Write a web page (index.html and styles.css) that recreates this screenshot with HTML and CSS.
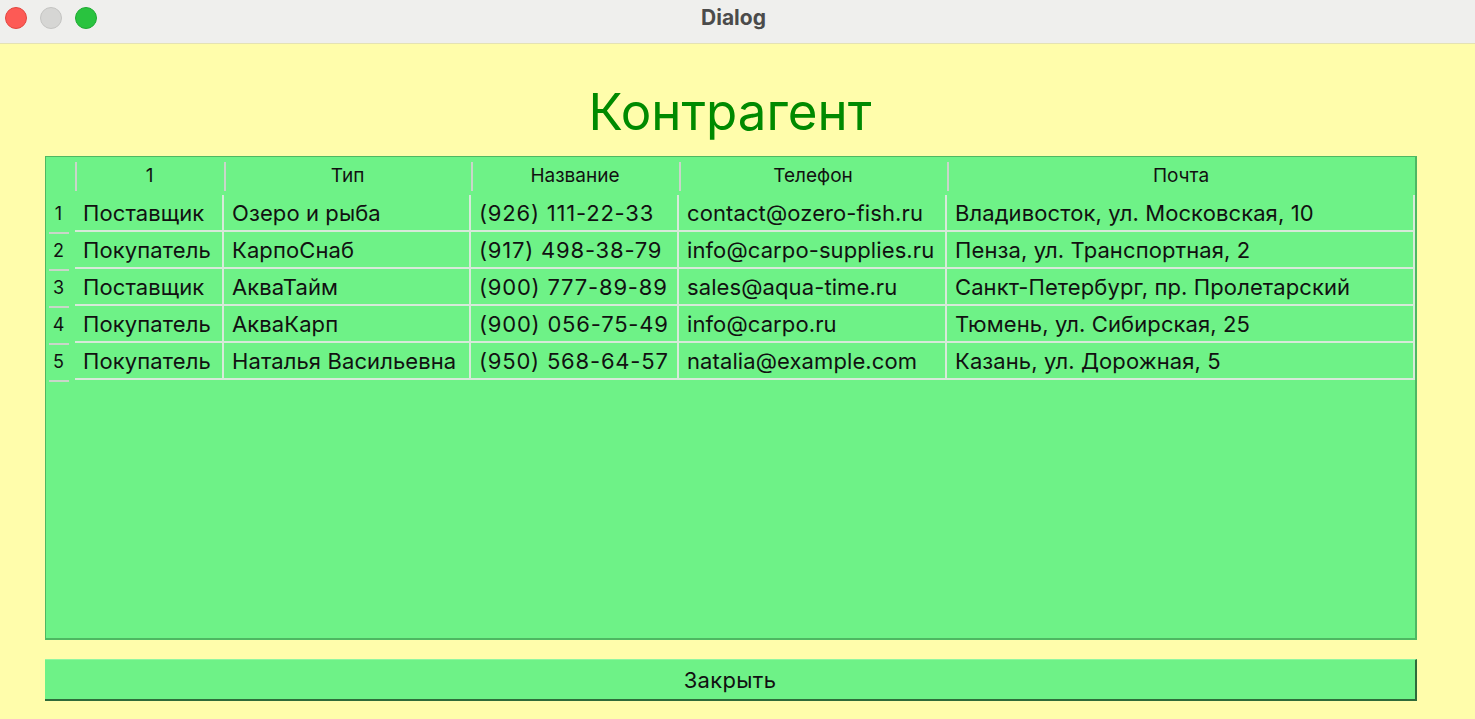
FILE: index.html
```html
<!DOCTYPE html>
<html lang="ru">
<head>
<meta charset="utf-8">
<title>Dialog</title>
<link rel="stylesheet" href="styles.css">
</head>
<body>
<div class="window">
  <div class="titlebar">
    <div class="lights">
      <span class="light red"></span>
      <span class="light gray"></span>
      <span class="light green"></span>
    </div>
    <div class="wtitle">Dialog</div>
  </div>
  <div class="content">
    <h1 class="heading">Контрагент</h1>
    <div class="table">
      <div class="row head">
        <div class="corner"></div>
        <div class="hcell">1</div>
        <div class="hcell">Тип</div>
        <div class="hcell">Название</div>
        <div class="hcell">Телефон</div>
        <div class="hcell">Почта</div>
      </div>
      <div class="row">
        <div class="vh">1</div>
        <div class="cell">Поставщик</div>
        <div class="cell">Озеро и рыба</div>
        <div class="cell phone">(926) 111-22-33</div>
        <div class="cell">contact@ozero-fish.ru</div>
        <div class="cell">Владивосток, ул. Московская, 10</div>
      </div>
      <div class="row">
        <div class="vh">2</div>
        <div class="cell">Покупатель</div>
        <div class="cell">КарпоСнаб</div>
        <div class="cell phone">(917) 498-38-79</div>
        <div class="cell">info@carpo-supplies.ru</div>
        <div class="cell">Пенза, ул. Транспортная, 2</div>
      </div>
      <div class="row">
        <div class="vh">3</div>
        <div class="cell">Поставщик</div>
        <div class="cell">АкваТайм</div>
        <div class="cell phone">(900) 777-89-89</div>
        <div class="cell">sales@aqua-time.ru</div>
        <div class="cell">Санкт-Петербург, пр. Пролетарский</div>
      </div>
      <div class="row">
        <div class="vh">4</div>
        <div class="cell">Покупатель</div>
        <div class="cell">АкваКарп</div>
        <div class="cell phone">(900) 056-75-49</div>
        <div class="cell">info@carpo.ru</div>
        <div class="cell">Тюмень, ул. Сибирская, 25</div>
      </div>
      <div class="row">
        <div class="vh">5</div>
        <div class="cell">Покупатель</div>
        <div class="cell">Наталья Васильевна</div>
        <div class="cell phone">(950) 568-64-57</div>
        <div class="cell">natalia@example.com</div>
        <div class="cell">Казань, ул. Дорожная, 5</div>
      </div>
    </div>
    <button class="close">Закрыть</button>
  </div>
</div>
</body>
</html>
```

FILE: styles.css
```css
* { box-sizing: border-box; }
html, body { margin: 0; padding: 0; }
body {
  width: 1475px;
  height: 719px;
  overflow: hidden;
  font-family: Inter, "Liberation Sans", sans-serif;
  background: #fffdab;
}
.window { display: flex; flex-direction: column; height: 719px; }
.titlebar {
  height: 44px;
  flex: none;
  background: #efefed;
  border-bottom: 1px solid #e4e2b4;
  display: flex;
  align-items: center;
  position: relative;
}
.lights { display: flex; gap: 13px; padding-left: 5px; padding-bottom: 7px; }
.light { width: 22px; height: 22px; border-radius: 50%; display: block; }
.light.red { background: #fd5a55; border: 1px solid #e2463f; }
.light.gray { background: #d6d6d4; border: 1px solid #c4c4c2; }
.light.green { background: #29c33f; border: 1px solid #1faa33; }
.wtitle {
  position: absolute;
  left: 0; right: 8px; top: 0; bottom: 0;
  display: flex; align-items: center; justify-content: center;
  font-weight: 700;
  font-size: 21px;
  color: #4b4b4b;
  padding-bottom: 9px;
}
.content {
  flex: 1;
  display: flex;
  flex-direction: column;
  padding: 0 58px 0 45px;
}
.heading {
  margin: 0;
  height: 112px;
  padding-top: 36px;
  text-align: center;
  font-weight: 400;
  font-size: 51px;
  line-height: 64px;
  color: #008a00;
  padding-right: 2px;
}
.table {
  height: 484px;
  background: #6ef287;
  border: 1px solid #4eb862;
  border-right-width: 2px;
  border-bottom-width: 2px;
}
.row {
  display: grid;
  grid-template-columns: 29px 149px 247px 208px 268px 468px;
  height: 37px;
}
.row.head { height: 38px; }
.hcell {
  font-size: 19px;
  color: #111;
  text-align: center;
  line-height: 37px;
  position: relative;
}
.hcell::before {
  content: "";
  position: absolute;
  left: 0; top: 5px; bottom: 4px;
  width: 2px;
  background: #c9d6c9;
}
.row:not(.head) { border-bottom: 2px solid #d6ead9; margin-left: 29px; grid-template-columns: 149px 247px 208px 268px 468px; position: relative; }
.vh {
  position: absolute;
  left: -29px; top: 0; width: 25px; height: 37px;
  font-size: 18px;
  line-height: 37px;
  text-align: center;
  color: #111;
}
.vh::after {
  content: "";
  position: absolute;
  left: 3px; right: 2px; bottom: -2px;
  height: 2px;
  background: #c9d6c9;
}
.cell {
  font-size: 22px;
  letter-spacing: 0.1px;
  color: #111;
  line-height: 35px;
  padding-top: 1px;
  padding-left: 8px;
  white-space: nowrap;
  overflow: hidden;
  border-right: 2px solid #d6ead9;
}
.cell.phone { letter-spacing: 0.8px; }
.cell:first-child { padding-left: 9px; }
.close {
  margin-top: 19px;
  height: 42px;
  background: #6ef287;
  border: none;
  border-top: 1px solid #8ff6a2;
  border-right: 2px solid #2f6b3a;
  border-bottom: 2px solid #2f6b3a;
  font-family: Inter, "Liberation Sans", sans-serif;
  font-size: 22px;
  letter-spacing: 0.3px;
  color: #111;
  padding: 0;
}
```
